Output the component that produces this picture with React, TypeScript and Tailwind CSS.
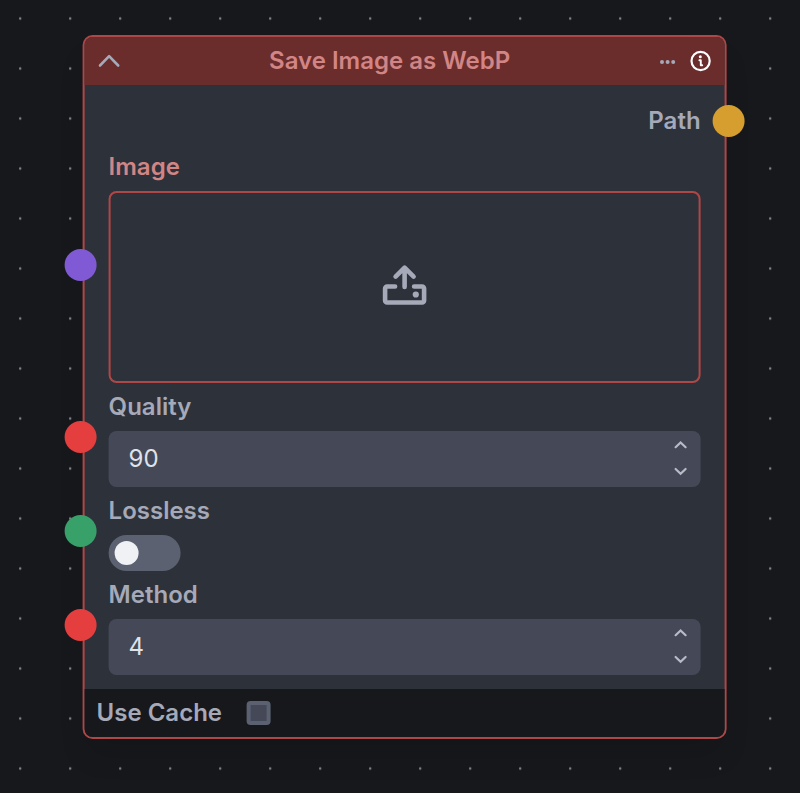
import React from "react";

function Handle({ className }: { className: string }) {
  return <span className={`absolute size-8 rounded-full ${className}`} />;
}

function NumberField({ value }: { value: string }) {
  return (
    <div className="flex h-14 shrink-0 items-center justify-between rounded-lg bg-[#454957] pr-3 pl-5 text-[#dfe2e8]">
      <span>{value}</span>
      <svg width="16" height="40" viewBox="0 0 16 40" fill="none" stroke="#b7bbc7" strokeWidth="2.2" strokeLinecap="round" strokeLinejoin="miter">
        <path d="M3 8.2 8 3.4l5 4.8M3 30l5 4.8 5-4.8" />
      </svg>
    </div>
  );
}

function Label({ children, className = "text-[#a5a9b8]" }: { children: React.ReactNode; className?: string }) {
  return <div className={`h-9 leading-[36px] font-semibold ${className}`}>{children}</div>;
}

export default function App() {
  return (
    <div className="relative h-[793px] w-[800px] overflow-hidden bg-[#17181c] font-['Inter',sans-serif] text-[24px]">
      <svg className="absolute inset-0" width="800" height="793">
        <defs>
          <pattern id="grid" width="50" height="50" x="-5" y="-6.5" patternUnits="userSpaceOnUse">
            <circle cx="25.2" cy="25" r="1.25" fill="#81838a" />
          </pattern>
        </defs>
        <rect width="800" height="793" fill="url(#grid)" />
      </svg>
      <div className="absolute top-[35px] left-[83px] w-[644px] translate-x-[-0.4px] rounded-[10px] border-2 border-[#af4747] bg-[#2d3139] shadow-[0_20px_30px_-6px_rgba(0,0,0,0.12)]">
        <header className="flex h-12 items-center rounded-t-lg bg-[#6b2c2c] px-3">
          <svg width="26" height="24" viewBox="0 0 26 24" fill="none" stroke="#a5a9b8" strokeWidth="2.6" strokeLinecap="round" strokeLinejoin="round">
            <path d="m3.4 16.5 9.1-9.3 9.1 9.3" />
          </svg>
          <h1 className="flex-1 text-center font-semibold text-[#d18585]">Save Image as WebP</h1>
          <svg width="56" height="24" viewBox="0 0 56 24" fill="none">
            <g fill="#a5a9b8">
              <circle cx="5.4" cy="13" r="2" />
              <circle cx="11" cy="13" r="2" />
              <circle cx="16.6" cy="13" r="2" />
            </g>
            <circle cx="44" cy="12" r="9.1" stroke="#fff" strokeWidth="2.2" />
            <circle cx="43.7" cy="7.8" r="1.5" fill="#fff" />
            <path d="M42.8 11.2h1.4v5h1.4" stroke="#fff" strokeWidth="1.9" strokeLinecap="round" strokeLinejoin="round" />
          </svg>
        </header>
        <main className="flex h-[604px] flex-col px-6">
          <div className="mt-[18px] h-9 text-right leading-[36px] font-semibold text-[#a5a9b8]">Path</div>
          <div className="mt-[10px]">
            <Label className="text-[#d18585]">Image</Label>
          </div>
          <div className="mt-[6px] flex h-48 shrink-0 items-center justify-center rounded-lg border-2 border-[#af4747]">
            <svg width="48" height="48" viewBox="0 0 48 48" fill="none" stroke="#a5a9b8" strokeWidth="4.6" strokeLinecap="round" strokeLinejoin="round">
              <path d="M14.5 23.5H6.5a2 2 0 0 0-2 2v12a2 2 0 0 0 2 2h35a2 2 0 0 0 2-2v-12a2 2 0 0 0-2-2h-8M24 24V5M15 13.6l9-9 9 9" />
              <circle cx="35.2" cy="31.5" r="3.1" fill="#a5a9b8" stroke="none" />
            </svg>
          </div>
          <div className="mt-[6px] mb-[6px]"><Label>Quality</Label></div>
          <NumberField value="90" />
          <div className="mt-[6px] mb-[6px]"><Label>Lossless</Label></div>
          <div className="flex h-9 w-[72px] shrink-0 items-center rounded-full bg-[#5b6170] pl-[6px]">
            <span className="size-6 rounded-full bg-[#eff1f4]" />
          </div>
          <div className="mt-[6px] mb-[6px]"><Label>Method</Label></div>
          <NumberField value="4" />
        </main>
        <footer className="flex h-12 items-center gap-[25px] rounded-b-lg bg-[#17181c] px-3">
          <span className="font-semibold text-[#a5a9b8]">Use Cache</span>
          <span className="size-6 rounded-[4px] border-4 border-[#5b6170] bg-[#454957]" />
        </footer>
        <Handle className="top-[68px] left-[628px] bg-[#d59e2e]" />
        <Handle className="top-[212px] left-[-20px] bg-[#805ad5]" />
        <Handle className="top-[384px] left-[-20px] bg-[#e53e3e]" />
        <Handle className="top-[478px] left-[-20px] bg-[#38a169]" />
        <Handle className="top-[572px] left-[-20px] bg-[#e53e3e]" />
      </div>
    </div>
  );
}
